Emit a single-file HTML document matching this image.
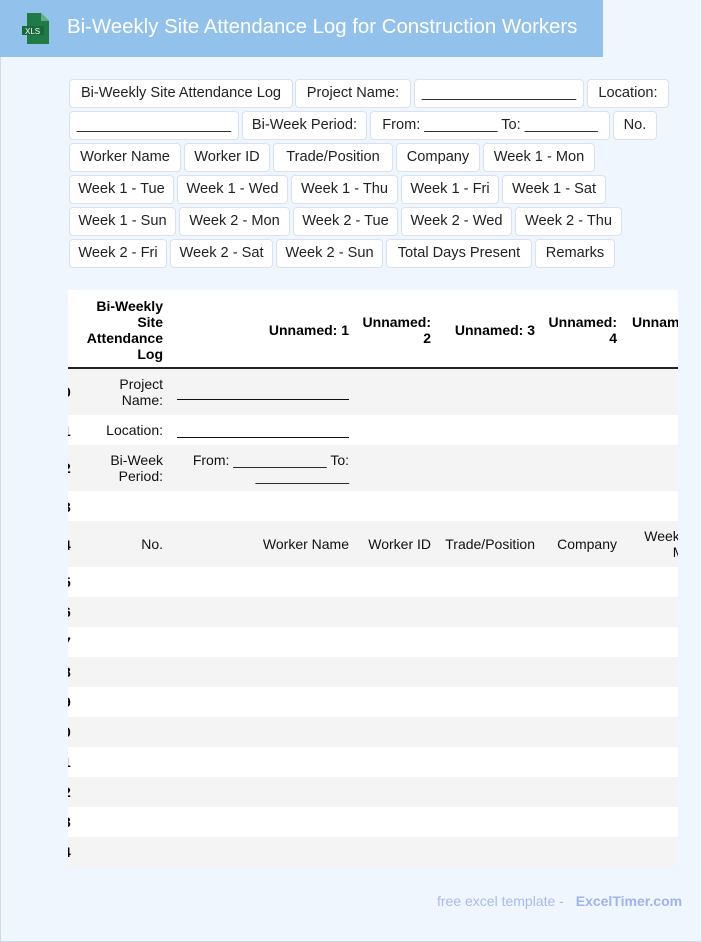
<!DOCTYPE html>
<html><head><meta charset="utf-8"><style>
*{box-sizing:border-box;margin:0;padding:0}
body{width:702px;height:942px;background:#eff6fe;position:relative;overflow:hidden;font-family:"Liberation Sans",Arial,sans-serif}
.frame{position:absolute;left:0;top:0;width:702px;height:942px;border:1px solid #cfdbe8;border-top:none}
.hdr{position:absolute;left:0;top:0;width:603px;height:57px;background:#92c1ec}
.hdr .t{position:absolute;left:67px;top:16px;font-size:20.4px;color:#fff;white-space:nowrap}
.tag{position:absolute;height:29px;background:#fff;border:1px solid #d9e2ec;border-radius:4px;font-size:14.6px;color:#222;text-align:center;line-height:27px;white-space:nowrap}
.tbl{position:absolute;left:68px;top:290px;width:610px;height:577px;overflow:hidden;background:#fff}
.r{position:absolute;left:0;width:610px}
.g{background:#f4f4f4}
.c{position:absolute;font-size:14px;color:#111;text-align:right;line-height:16px}
.b{font-weight:bold;color:#000}
.foot{position:absolute;top:893px;left:437px;font-size:14px;color:#a9b9ef;white-space:nowrap}
.foot b{color:#9fb3ee;margin-left:8px}
</style></head><body>
<div class="frame"></div>
<div class="hdr">
<svg style="position:absolute;left:22px;top:13px" width="29" height="31" viewBox="0 0 29 31"><path d="M5 0h14l8 8v23H5z" fill="#1f7a45"/><path d="M19 0v8h8z" fill="#5fb07e"/><rect x="0" y="13" width="22" height="9" fill="#176a3a"/><text x="3" y="21" font-size="8" fill="#fff" font-family="Liberation Sans">XLS</text></svg>
<div class="t">Bi-Weekly Site Attendance Log for Construction Workers</div></div>

<div class="tag" style="left:69px;top:79px;width:224px">Bi-Weekly Site Attendance Log</div>
<div class="tag" style="left:295px;top:79px;width:116px">Project Name:</div>
<div class="tag" style="left:414px;top:79px;width:170px">___________________</div>
<div class="tag" style="left:587px;top:79px;width:82px">Location:</div>
<div class="tag" style="left:69px;top:111px;width:170px">___________________</div>
<div class="tag" style="left:242px;top:111px;width:125px">Bi-Week Period:</div>
<div class="tag" style="left:370px;top:111px;width:240px">From: _________ To: _________</div>
<div class="tag" style="left:613px;top:111px;width:44px">No.</div>
<div class="tag" style="left:69px;top:143px;width:112px">Worker Name</div>
<div class="tag" style="left:184px;top:143px;width:86px">Worker ID</div>
<div class="tag" style="left:273px;top:143px;width:120px">Trade/Position</div>
<div class="tag" style="left:396px;top:143px;width:84px">Company</div>
<div class="tag" style="left:483px;top:143px;width:112px">Week 1 - Mon</div>
<div class="tag" style="left:69px;top:175px;width:105px">Week 1 - Tue</div>
<div class="tag" style="left:177px;top:175px;width:111px">Week 1 - Wed</div>
<div class="tag" style="left:291px;top:175px;width:107px">Week 1 - Thu</div>
<div class="tag" style="left:401px;top:175px;width:98px">Week 1 - Fri</div>
<div class="tag" style="left:502px;top:175px;width:104px">Week 1 - Sat</div>
<div class="tag" style="left:69px;top:207px;width:107px">Week 1 - Sun</div>
<div class="tag" style="left:179px;top:207px;width:111px">Week 2 - Mon</div>
<div class="tag" style="left:293px;top:207px;width:105px">Week 2 - Tue</div>
<div class="tag" style="left:401px;top:207px;width:111px">Week 2 - Wed</div>
<div class="tag" style="left:515px;top:207px;width:107px">Week 2 - Thu</div>
<div class="tag" style="left:69px;top:239px;width:98px">Week 2 - Fri</div>
<div class="tag" style="left:170px;top:239px;width:103px">Week 2 - Sat</div>
<div class="tag" style="left:276px;top:239px;width:107px">Week 2 - Sun</div>
<div class="tag" style="left:386px;top:239px;width:146px">Total Days Present</div>
<div class="tag" style="left:535px;top:239px;width:80px">Remarks</div>

<div class="tbl">
<div class="r" style="top:0;height:79px;border-bottom:2px solid #222"></div>
<div class="c b" style="right:515px;top:8px;width:90px">Bi-Weekly Site Attendance Log</div>
<div class="c b" style="right:329px;top:32px;width:120px">Unnamed: 1</div>
<div class="c b" style="right:247px;top:24px;width:80px">Unnamed: 2</div>
<div class="c b" style="right:143px;top:32px;width:100px">Unnamed: 3</div>
<div class="c b" style="right:61px;top:24px;width:80px">Unnamed: 4</div>
<div class="c b" style="left:564px;top:24px;text-align:left;white-space:nowrap">Unnamed: 5</div>

<div class="r g" style="top:79px;height:46px"></div>
<div class="r" style="top:125px;height:30px"></div>
<div class="r g" style="top:155px;height:46px"></div>
<div class="r" style="top:201px;height:30px"></div>
<div class="r g" style="top:231px;height:46px"></div>
<div class="r g" style="top:307px;height:30px"></div>
<div class="r g" style="top:367px;height:30px"></div>
<div class="r g" style="top:427px;height:30px"></div>
<div class="r g" style="top:487px;height:30px"></div>
<div class="r g" style="top:547px;height:30px"></div>

<div class="c b" style="left:-5px;top:94px">0</div>
<div class="c b" style="left:-5px;top:133px">1</div>
<div class="c b" style="left:-5px;top:170px">2</div>
<div class="c b" style="left:-5px;top:209px">3</div>
<div class="c b" style="left:-5px;top:247px">4</div>
<div class="c b" style="left:-5px;top:284px">5</div>
<div class="c b" style="left:-5px;top:314px">6</div>
<div class="c b" style="left:-5px;top:344px">7</div>
<div class="c b" style="left:-5px;top:374px">8</div>
<div class="c b" style="left:-5px;top:404px">9</div>
<div class="c b" style="left:-5px;top:434px">0</div>
<div class="c b" style="left:-5px;top:464px">1</div>
<div class="c b" style="left:-5px;top:494px">2</div>
<div class="c b" style="left:-5px;top:524px">3</div>
<div class="c b" style="left:-5px;top:554px">4</div>

<div class="c" style="right:515px;top:86px;width:80px">Project Name:</div>
<div class="c" style="right:329px;top:109px;width:172px;border-top:1px solid #111;height:0"></div>
<div class="c" style="right:515px;top:132px;width:80px">Location:</div>
<div class="c" style="right:329px;top:147px;width:172px;border-top:1px solid #111;height:0"></div>
<div class="c" style="right:515px;top:162px;width:80px">Bi-Week Period:</div>
<div class="c" style="right:329px;top:162px;width:172px">From: ____________ To: ____________</div>
<div class="c" style="right:515px;top:246px;width:80px">No.</div>
<div class="c" style="right:329px;top:246px;width:150px">Worker Name</div>
<div class="c" style="right:247px;top:246px;width:80px">Worker ID</div>
<div class="c" style="right:143px;top:246px;width:100px">Trade/Position</div>
<div class="c" style="right:61px;top:246px;width:80px">Company</div>
<div class="c" style="left:572px;top:238px;width:60px;text-align:right">Week 1 - Mon</div>
</div>

<div class="foot">free excel template - <b>ExcelTimer.com</b></div>
</body></html>
